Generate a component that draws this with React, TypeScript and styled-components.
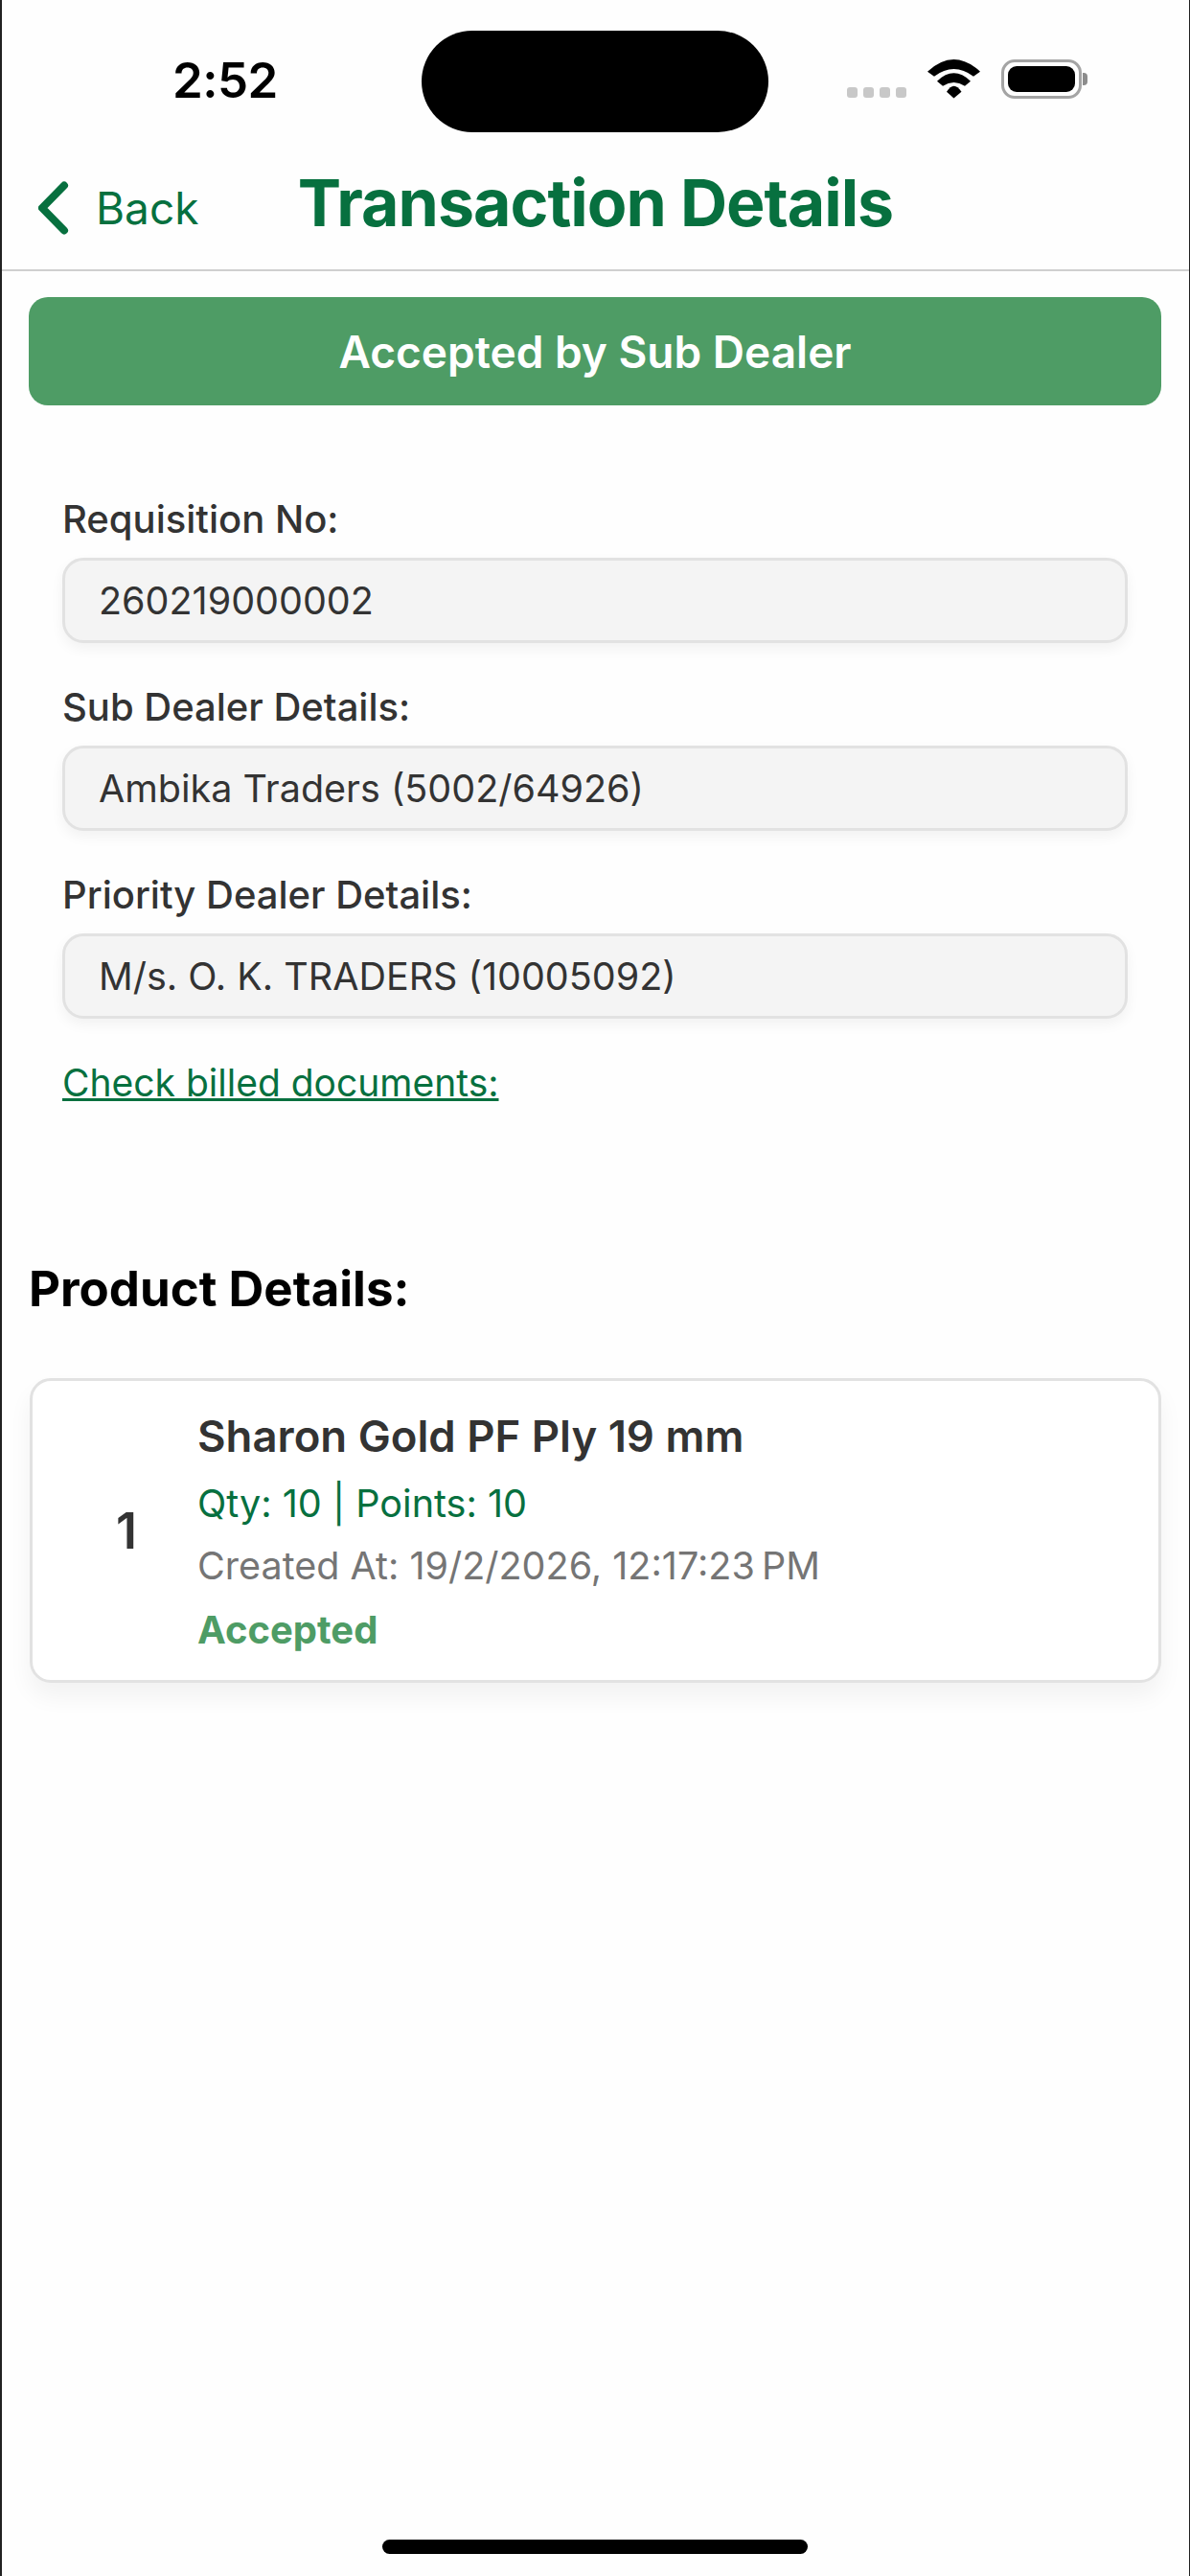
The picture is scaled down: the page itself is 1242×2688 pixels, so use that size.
import { createGlobalStyle } from "styled-components";
import styled from "styled-components";

const GREEN = "#07703f";
const SOFT_GREEN = "#4e9c65";

const details = [
    { label: "Requisition No:", value: "260219000002" },
    { label: "Sub Dealer Details:", value: "Ambika Traders (5002/64926)" },
    { label: "Priority Dealer Details:", value: "M/s. O. K. TRADERS (10005092)" },
];

function App() {
    return (
        <Screen>
            <GlobalStyle />
            <StatusBar>
                <Time>2:52</Time>
                <Island />
                <StatusIcons>
                    <SignalDots>
                        <Dot /><Dot /><Dot /><Dot />
                    </SignalDots>
                    <svg width="55" height="41" viewBox="0 0 55 41">
                        <path d="M0 12.7 Q27.5 -12.7 55 12.7 L48 17.7 Q27.5 2.3 7 17.7 Z" fill="#000" />
                        <path d="M10 22.7 Q27.5 5.9 45 22.7 L39 27.7 Q27.5 20.3 16 27.7 Z" fill="#000" />
                        <path d="M20 33.7 Q27.5 21.7 35.5 33.7 L27.5 40.5 Z" fill="#000" />
                    </svg>
                    <Battery>
                        <BatteryFill />
                    </Battery>
                </StatusIcons>
            </StatusBar>
            <Header>
                <BackButton>
                    <svg width="38" height="56" viewBox="0 0 38 56">
                        <path d="M27 4.5 L4 28 L27 51.5" fill="none" stroke={GREEN} strokeWidth="8" strokeLinecap="round" strokeLinejoin="round" />
                    </svg>
                    <BackText>Back</BackText>
                </BackButton>
                <Title>Transaction Details</Title>
            </Header>
            <Content>
                <Banner>Accepted by Sub Dealer</Banner>
                <Form>
                    {details.map((item) => {
                        return (
                            <Field key={item.label}>
                                <FieldLabel>{item.label}</FieldLabel>
                                <FieldValue>{item.value}</FieldValue>
                            </Field>
                        )
                    })}
                    <DocsLink>Check billed documents:</DocsLink>
                </Form>
                <SectionTitle>Product Details:</SectionTitle>
                <ProductCard>
                    <ProductIndex>1</ProductIndex>
                    <ProductInfo>
                        <ProductName>Sharon Gold PF Ply 19 mm</ProductName>
                        <ProductQty>Qty: 10 | Points: 10</ProductQty>
                        <ProductDate>{"Created At: 19/2/2026, 12:17:23\u202fPM"}</ProductDate>
                        <ProductStatus>Accepted</ProductStatus>
                    </ProductInfo>
                </ProductCard>
            </Content>
            <HomeIndicator />
        </Screen>
    )
}

export default App;

const GlobalStyle = createGlobalStyle`
    html, body {
        margin: 0;
        padding: 0;
        background: #ffffff;
    }
    * {
        box-sizing: border-box;
    }
`

const Screen = styled.div`
    position: relative;
    width: 1242px;
    height: 2688px;
    overflow: hidden;
    background: #fefefe;
    border-left: 2px solid #222222;
    border-right: 1px solid #222222;
    font-family: Inter, "Liberation Sans", sans-serif;
`

const StatusBar = styled.div`
    position: relative;
    height: 168px;
    display: flex;
    align-items: flex-start;
    justify-content: space-between;
    padding: 58px 112px 0 178px;
`

const Time = styled.div`
    font-size: 51px;
    line-height: 52px;
    font-weight: 600;
    letter-spacing: -0.5px;
    color: #000;
`

const Island = styled.div`
    position: absolute;
    left: 438px;
    top: 32px;
    width: 362px;
    height: 106px;
    border-radius: 53px;
    background: #000;
`

const StatusIcons = styled.div`
    display: flex;
    align-items: flex-end;
    gap: 22px;
    margin-top: 4px;
`

const SignalDots = styled.div`
    display: flex;
    gap: 6px;
    margin-bottom: 1px;
`

const Dot = styled.span`
    width: 11px;
    height: 11px;
    border-radius: 3px;
    background: #c8c8c8;
`

const Battery = styled.div`
    position: relative;
    width: 84px;
    height: 41px;
    padding: 4px;
    border: 3px solid #a4a4a4;
    border-radius: 14px;
    &::after {
        content: "";
        position: absolute;
        right: -9px;
        top: 11px;
        width: 5px;
        height: 13px;
        border-radius: 0 4px 4px 0;
        background: #8c8c8c;
    }
`

const BatteryFill = styled.div`
    width: 100%;
    height: 100%;
    border-radius: 9px;
    background: #000;
`

const Header = styled.div`
    height: 115px;
    display: grid;
    grid-template-columns: 1fr auto 1fr;
    align-items: center;
    padding-bottom: 28px;
    border-bottom: 2px solid #cfcfcf;
`

const BackButton = styled.div`
    justify-self: start;
    display: flex;
    align-items: center;
    gap: 22px;
    margin: 12px 0 0 38px;
`

const BackText = styled.span`
    font-size: 46px;
    line-height: 56px;
    font-weight: 400;
    color: ${GREEN};
`

const Title = styled.h1`
    margin: 0;
    font-size: 68px;
    line-height: 80px;
    font-weight: 700;
    letter-spacing: -1px;
    color: ${GREEN};
`

const Content = styled.div`
    padding: 27px 29px 0 28px;
`

const Banner = styled.div`
    height: 113px;
    display: flex;
    align-items: center;
    justify-content: center;
    border-radius: 20px;
    background: ${SOFT_GREEN};
    color: #ffffff;
    font-size: 46px;
    font-weight: 600;
`

const Form = styled.div`
    display: flex;
    flex-direction: column;
    gap: 45px;
    padding: 97px 35px 0;
`

const Field = styled.div`
    display: flex;
    flex-direction: column;
    gap: 18px;
`

const FieldLabel = styled.div`
    font-size: 40px;
    line-height: 44px;
    font-weight: 500;
    color: #333333;
`

const FieldValue = styled.div`
    height: 89px;
    display: flex;
    align-items: center;
    padding-left: 35px;
    border: 3px solid #e2e2e2;
    border-radius: 22px;
    background: #f4f4f4;
    box-shadow: 0 6px 14px rgba(0, 0, 0, 0.05);
    font-size: 39.5px;
    color: #333333;
`

const DocsLink = styled.a`
    font-size: 39px;
    line-height: 44px;
    color: ${GREEN};
    text-decoration: underline;
`

const SectionTitle = styled.h2`
    margin: 165px 0 0;
    font-size: 51px;
    line-height: 56px;
    font-weight: 700;
    color: #000;
`

const ProductCard = styled.div`
    margin-top: 65px;
    margin-left: 1px;
    height: 318px;
    display: flex;
    align-items: center;
    border: 3px solid #e2e2e2;
    border-radius: 22px;
    background: #ffffff;
    box-shadow: 0 14px 24px rgba(0, 0, 0, 0.05);
`

const ProductIndex = styled.div`
    width: 172px;
    padding-left: 87px;
    font-size: 52px;
    font-weight: 600;
    color: #333333;
`

const ProductInfo = styled.div`
    display: flex;
    flex-direction: column;
    padding-top: 5px;
`

const ProductName = styled.div`
    font-size: 45.5px;
    line-height: 72px;
    font-weight: 600;
    color: #333333;
`

const ProductQty = styled.div`
    font-size: 39.6px;
    line-height: 68px;
    color: ${GREEN};
`

const ProductDate = styled.div`
    font-size: 39.5px;
    line-height: 62px;
    color: #757575;
`

const ProductStatus = styled.div`
    font-size: 40px;
    line-height: 72px;
    font-weight: 700;
    color: ${SOFT_GREEN};
`

const HomeIndicator = styled.div`
    position: absolute;
    left: 397px;
    bottom: 23px;
    width: 444px;
    height: 15px;
    border-radius: 8px;
    background: #000;
`
